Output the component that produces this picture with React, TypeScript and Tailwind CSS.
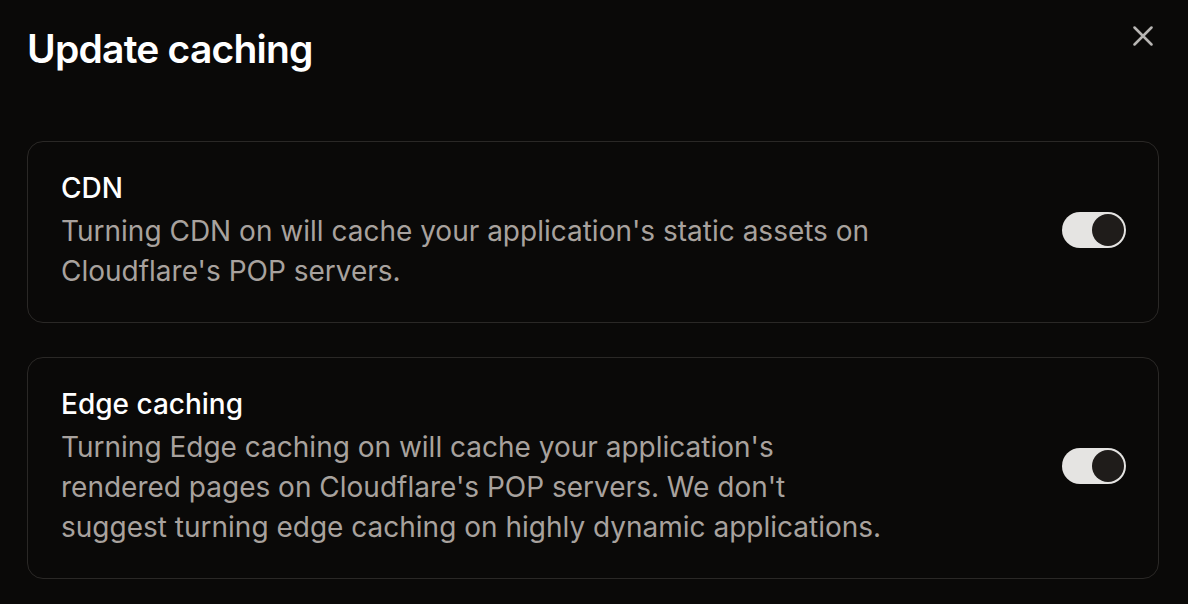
import React from 'react';

const Toggle = ({ on }: { on: boolean }) => (
  <button
    className={`relative w-[64px] h-[36px] rounded-full shrink-0 flex items-center px-[2px] ${on ? 'bg-[#e5e4e2] justify-end' : 'bg-[#3a3734] justify-start'}`}
  >
    <span className="w-[32px] h-[32px] rounded-full bg-[#1f1c1a]" />
  </button>
);

const SettingCard = ({ title, text }: { title: string; text: string }) => (
  <div className="flex items-center justify-between border border-[#2a2826] rounded-[16px] pl-[33px] pr-[32px] pt-[26px] pb-[31px]">
    <div className="max-w-[823px]">
      <h3 className="text-[28px] leading-[40px] font-medium text-white">{title}</h3>
      <p className="mt-[3px] text-[28px] leading-[40px] text-[#a8a29e]">{text}</p>
    </div>
    <Toggle on />
  </div>
);

export default function App() {
  return (
    <div
      className="w-full h-[604px] bg-[#0a0908] pl-[27px] pr-[29px] overflow-hidden"
      style={{ fontFamily: 'Inter, "Noto Sans", sans-serif' }}
    >
      <header className="flex items-start justify-between">
        <h1 className="pt-[27px] text-[39px] leading-[44px] font-semibold tracking-[-0.02em] text-white">Update caching</h1>
        <button className="mt-[26px] mr-[6px] text-[#b8b6b4]">
          <svg width="20" height="20" viewBox="0 0 20 20" fill="none" stroke="currentColor" strokeWidth="2.5" strokeLinecap="round">
            <path d="M1.5 1.5L18.5 18.5M18.5 1.5L1.5 18.5" />
          </svg>
        </button>
      </header>

      <div className="mt-[70px] flex flex-col gap-[34px]">
        <SettingCard
          title="CDN"
          text="Turning CDN on will cache your application's static assets on Cloudflare's POP servers."
        />
        <SettingCard
          title="Edge caching"
          text="Turning Edge caching on will cache your application's rendered pages on Cloudflare's POP servers. We don't suggest turning edge caching on highly dynamic applications."
        />
      </div>
    </div>
  );
}
